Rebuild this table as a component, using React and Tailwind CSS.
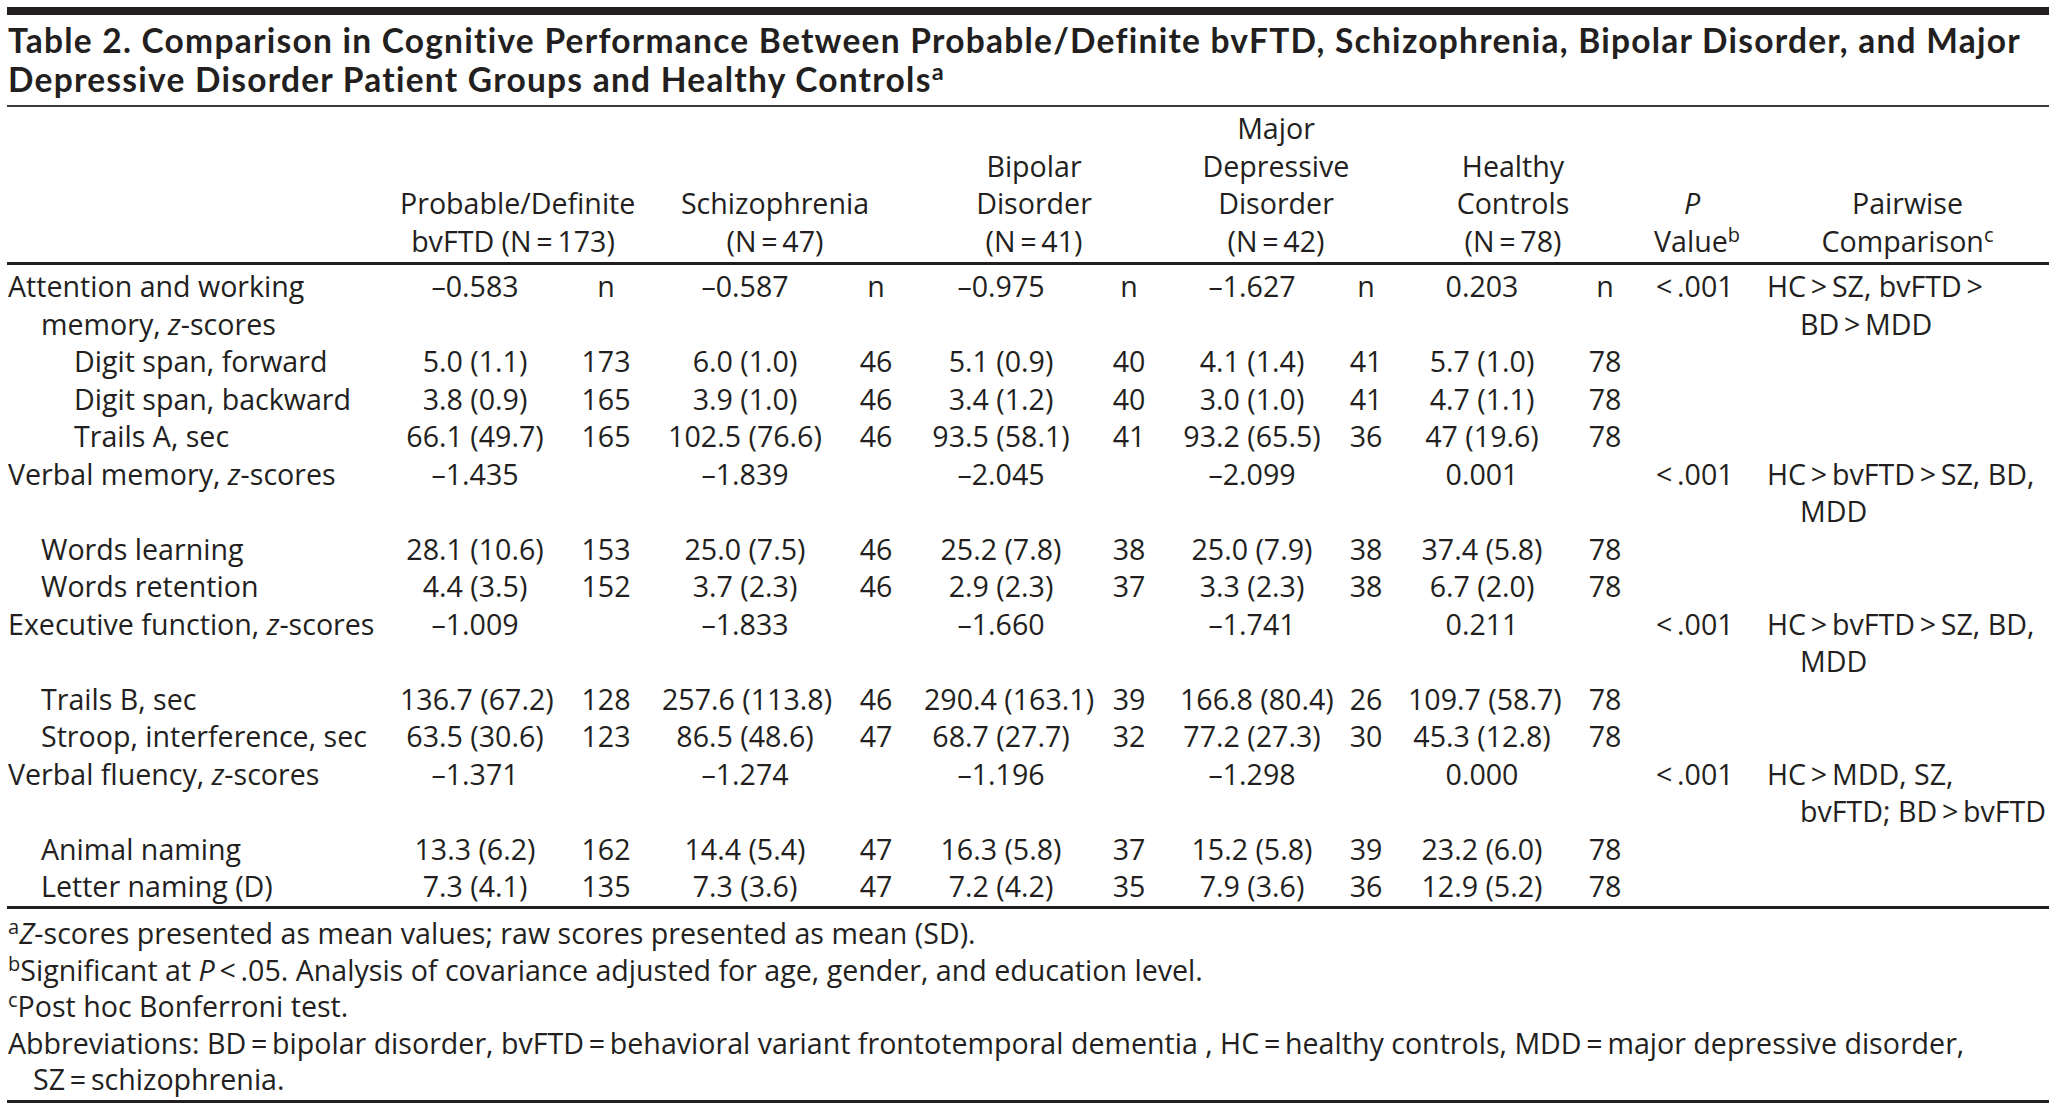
import React from "react"

const T = "\u2009"
const COLS =
  "grid grid-cols-[393px_150px_112px_166px_96px_154px_102px_144px_84px_148px_98px_112px_283px]"

const Z = () => <i>z</i>

const ROWS = [
  {
    label: ["Attention and working", <>memory, <Z />-scores</>],
    level: 0,
    vals: ["–0.583", "n", "–0.587", "n", "–0.975", "n", "–1.627", "n", "0.203", "n"],
    p: `<${T}.001`,
    pw: [`HC${T}>${T}SZ, bvFTD${T}>`, `BD${T}>${T}MDD`],
  },
  { label: ["Digit span, forward"], level: 2, vals: ["5.0 (1.1)", "173", "6.0 (1.0)", "46", "5.1 (0.9)", "40", "4.1 (1.4)", "41", "5.7 (1.0)", "78"] },
  { label: ["Digit span, backward"], level: 2, vals: ["3.8 (0.9)", "165", "3.9 (1.0)", "46", "3.4 (1.2)", "40", "3.0 (1.0)", "41", "4.7 (1.1)", "78"] },
  { label: ["Trails A, sec"], level: 2, vals: ["66.1 (49.7)", "165", "102.5 (76.6)", "46", "93.5 (58.1)", "41", "93.2 (65.5)", "36", "47 (19.6)", "78"] },
  {
    label: [<>Verbal memory, <Z />-scores</>],
    level: 0,
    vals: ["–1.435", "", "–1.839", "", "–2.045", "", "–2.099", "", "0.001", ""],
    p: `<${T}.001`,
    pw: [`HC${T}>${T}bvFTD${T}>${T}SZ, BD,`, "MDD"],
  },
  { label: ["Words learning"], level: 1, vals: ["28.1 (10.6)", "153", "25.0 (7.5)", "46", "25.2 (7.8)", "38", "25.0 (7.9)", "38", "37.4 (5.8)", "78"] },
  { label: ["Words retention"], level: 1, vals: ["4.4 (3.5)", "152", "3.7 (2.3)", "46", "2.9 (2.3)", "37", "3.3 (2.3)", "38", "6.7 (2.0)", "78"] },
  {
    label: [<>Executive function, <Z />-scores</>],
    level: 0,
    vals: ["–1.009", "", "–1.833", "", "–1.660", "", "–1.741", "", "0.211", ""],
    p: `<${T}.001`,
    pw: [`HC${T}>${T}bvFTD${T}>${T}SZ, BD,`, "MDD"],
  },
  { label: ["Trails B, sec"], level: 1, vals: ["136.7 (67.2)", "128", "257.6 (113.8)", "46", "290.4 (163.1)", "39", "166.8 (80.4)", "26", "109.7 (58.7)", "78"] },
  { label: ["Stroop, interference, sec"], level: 1, vals: ["63.5 (30.6)", "123", "86.5 (48.6)", "47", "68.7 (27.7)", "32", "77.2 (27.3)", "30", "45.3 (12.8)", "78"] },
  {
    label: [<>Verbal fluency, <Z />-scores</>],
    level: 0,
    vals: ["–1.371", "", "–1.274", "", "–1.196", "", "–1.298", "", "0.000", ""],
    p: `<${T}.001`,
    pw: [`HC${T}>${T}MDD, SZ,`, `bvFTD; BD${T}>${T}bvFTD`],
  },
  { label: ["Animal naming"], level: 1, vals: ["13.3 (6.2)", "162", "14.4 (5.4)", "47", "16.3 (5.8)", "37", "15.2 (5.8)", "39", "23.2 (6.0)", "78"] },
  { label: ["Letter naming (D)"], level: 1, vals: ["7.3 (4.1)", "135", "7.3 (3.6)", "47", "7.2 (4.2)", "35", "7.9 (3.6)", "36", "12.9 (5.2)", "78"] },
]

const GROUPS = [
  ["Probable/Definite", `bvFTD (N${T}=${T}173)`],
  ["Schizophrenia", `(N${T}=${T}47)`],
  ["Bipolar", "Disorder", `(N${T}=${T}41)`],
  ["Major", "Depressive", "Disorder", `(N${T}=${T}42)`],
  ["Healthy", "Controls", `(N${T}=${T}78)`],
]

const INDENT = ["pl-[1px]", "pl-[34px]", "pl-[67px]"]

function Lines({ lines }) {
  return lines.map((l, i) => <div key={i}>{l}</div>)
}

function Sup({ children }) {
  return <sup className="text-[0.7em]">{children}</sup>
}

export default function App() {
  return (
    <div className="min-h-screen bg-white font-['Open_Sans',sans-serif] text-[#231f20]">
      <div className="ml-[7px] w-[2042px] pt-[7px]">
        <div className="h-[8px] bg-[#231f20]" />

        <h1 className="mt-[6px] whitespace-nowrap pl-[1px] font-['Lato','Open_Sans',sans-serif] text-[33.5px] font-bold leading-[39px] tracking-[1.25px] [font-variant-ligatures:none]">
          <div>
            Table 2. Comparison in Cognitive Performance Between Probable/Definite bvFTD, Schizophrenia, Bipolar Disorder, and Major
          </div>
          <div>
            Depressive Disorder Patient Groups and Healthy Controls<Sup>a</Sup>
          </div>
        </h1>

        <div className="mt-[6px] h-[2px] bg-[#3a3a3a]" />

        {/* column heads */}
        <div className={`${COLS} items-end pb-[3px] pt-[2px] text-[28.6px] leading-[37.5px]`}>
          <div />
          {GROUPS.map((g, i) => (
            <div key={i} className="col-span-2 whitespace-nowrap pr-[36px] text-center">
              <Lines lines={g} />
            </div>
          ))}
          <div className="pr-[36px] text-center">
            <div>
              <i>P</i>
            </div>
            <div>
              Value<Sup>b</Sup>
            </div>
          </div>
          <div className="text-center">
            <div>Pairwise</div>
            <div>
              Comparison<Sup>c</Sup>
            </div>
          </div>
        </div>

        <div className="h-[3px] bg-[#231f20]" />

        {/* body */}
        <div className={`${COLS} pb-[1.5px] pt-[2px] text-[28.6px] leading-[37.5px]`}>
          {ROWS.map((r, ri) => (
            <React.Fragment key={ri}>
              <div className={`${INDENT[r.level]} whitespace-nowrap`}>
                {r.label.map((l, i) => (
                  <div key={i} className={i > 0 ? "pl-[33px]" : ""}>
                    {l}
                  </div>
                ))}
              </div>
              {r.vals.map((v, vi) => (
                <div key={vi} className="whitespace-nowrap text-center">
                  {v}
                </div>
              ))}
              <div className="whitespace-nowrap pl-[2px]">{r.p || ""}</div>
              <div className="whitespace-nowrap pl-[1px]">
                {(r.pw || []).map((l, i) => (
                  <div key={i} className={i > 0 ? "pl-[33px]" : ""}>
                    {l}
                  </div>
                ))}
              </div>
            </React.Fragment>
          ))}
        </div>

        <div className="h-[3px] bg-[#231f20]" />

        {/* footnotes */}
        <div className="whitespace-nowrap pb-[2px] pl-[1px] pt-[6px] text-[28.6px] leading-[36.5px]">
          <div>
            <Sup>a</Sup>
            <i>Z</i>-scores presented as mean values; raw scores presented as mean (SD).
          </div>
          <div>
            <Sup>b</Sup>Significant at <i>P</i>
            {T}&lt;{T}.05. Analysis of covariance adjusted for age, gender, and education level.
          </div>
          <div>
            <Sup>c</Sup>Post hoc Bonferroni test.
          </div>
          <div>
            Abbreviations: BD{T}={T}bipolar disorder, bvFTD{T}={T}behavioral variant frontotemporal dementia , HC{T}={T}healthy controls, MDD{T}={T}major depressive disorder,
          </div>
          <div className="pl-[25px]">SZ{T}={T}schizophrenia.</div>
        </div>

        <div className="h-[3px] bg-[#231f20]" />
      </div>
    </div>
  )
}
